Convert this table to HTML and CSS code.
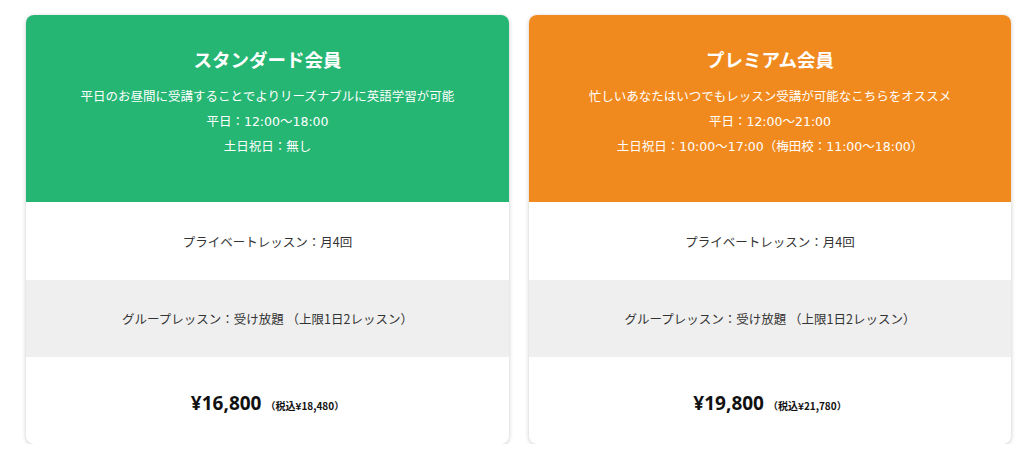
FILE: index.html
```html
<!DOCTYPE html>
<html lang="ja">
<head>
<meta charset="utf-8">
<link rel="stylesheet" href="styles.css">
</head>
<body>
<div class="plans">
  <div class="card">
    <div class="head green">
      <h2 class="title">スタンダード会員</h2>
      <p class="line">平日のお昼間に受講することでよりリーズナブルに英語学習が可能</p>
      <p class="line">平日：12:00～18:00</p>
      <p class="line">土日祝日：無し</p>
    </div>
    <div class="row">プライベートレッスン：月4回</div>
    <div class="row gray">グループレッスン：受け放題 （上限1日2レッスン）</div>
    <div class="row price"><span class="amount">¥16,800</span><span class="tax">（税込¥18,480）</span></div>
  </div>
  <div class="card">
    <div class="head orange">
      <h2 class="title">プレミアム会員</h2>
      <p class="line">忙しいあなたはいつでもレッスン受講が可能なこちらをオススメ</p>
      <p class="line">平日：12:00～21:00</p>
      <p class="line">土日祝日：10:00～17:00（梅田校：11:00～18:00）</p>
    </div>
    <div class="row">プライベートレッスン：月4回</div>
    <div class="row gray">グループレッスン：受け放題 （上限1日2レッスン）</div>
    <div class="row price"><span class="amount">¥19,800</span><span class="tax">（税込¥21,780）</span></div>
  </div>
</div>
</body>
</html>
```
FILE: styles.css
```css
html, body {
  margin: 0;
  padding: 0;
  background: #ffffff;
}
body {
  font-family: "Noto Sans CJK JP", "Noto Sans", sans-serif;
  color: #333333;
}
.plans {
  display: flex;
  gap: 20px;
  padding: 15px 13px 0 26px;
}
.card {
  width: 483px;
  flex: 0 0 483px;
  border-radius: 8px;
  overflow: hidden;
  background: #ffffff;
  box-shadow: 0 1px 4px rgba(0, 0, 0, 0.22);
}
.card + .card {
  width: 482px;
  flex-basis: 482px;
}
.head {
  height: 187px;
  box-sizing: border-box;
  padding-top: 31px;
  color: #ffffff;
  text-align: center;
}
.green { background: #25b674; }
.orange { background: #f18a1e; }
.title {
  margin: 0 0 12px;
  font-size: 18.5px;
  line-height: 26px;
  font-weight: 700;
}
.line {
  margin: 0;
  font-family: "DejaVu Sans", "Noto Sans CJK JP", sans-serif;
  font-size: 12.5px;
  line-height: 25px;
}
.row {
  height: 78px;
  display: flex;
  align-items: center;
  justify-content: center;
  font-size: 12.5px;
}
.row.gray {
  background: #efefef;
  height: 77px;
}
.row.price {
  height: 87px;
  align-items: baseline;
  line-height: 92px;
  color: #111111;
}
.amount {
  font-family: "Noto Sans", "Noto Sans CJK JP", sans-serif;
  font-size: 19px;
  font-weight: 700;
}
.tax {
  font-size: 10px;
  font-weight: 700;
  margin-left: 4px;
}
```
